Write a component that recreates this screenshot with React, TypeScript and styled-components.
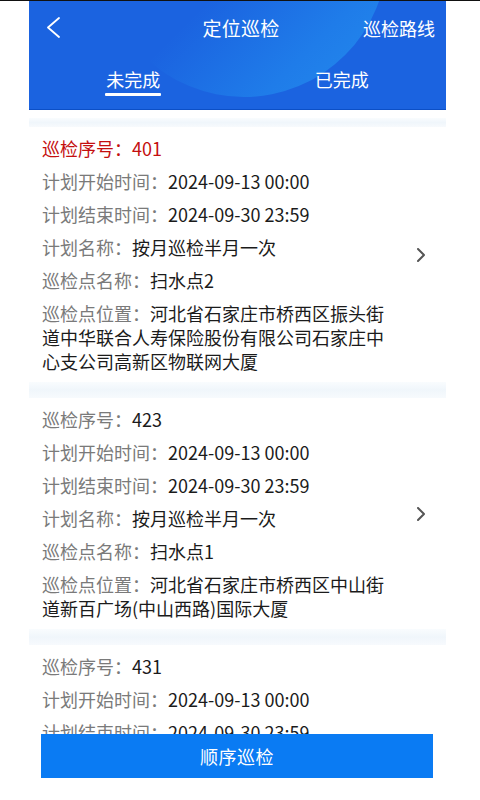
import React from "react";
import styled, { createGlobalStyle } from "styled-components";

interface Task {
  no: number;
  start: string;
  end: string;
  plan: string;
  point: string;
  address: string;
  urgent?: boolean;
}

const tasks: Task[] = [
  {
    no: 401,
    start: "2024-09-13 00:00",
    end: "2024-09-30 23:59",
    plan: "按月巡检半月一次",
    point: "扫水点2",
    address: "河北省石家庄市桥西区振头街道中华联合人寿保险股份有限公司石家庄中心支公司高新区物联网大厦",
    urgent: true,
  },
  {
    no: 423,
    start: "2024-09-13 00:00",
    end: "2024-09-30 23:59",
    plan: "按月巡检半月一次",
    point: "扫水点1",
    address: "河北省石家庄市桥西区中山街道新百广场(中山西路)国际大厦",
  },
  {
    no: 431,
    start: "2024-09-13 00:00",
    end: "2024-09-30 23:59",
    plan: "按月巡检半月一次",
    point: "扫水点3",
    address: "河北省石家庄市桥西区振头街道高新区物联网大厦",
  },
];

const GlobalStyle = createGlobalStyle`
  body {
    margin: 0;
    background: #fff;
    font-family: "Noto Sans CJK SC", "Noto Sans", sans-serif;
  }
`;

const TopStrip = styled.div`
  height: 1px;
  background: #111;
`;

const Page = styled.div`
  margin-left: 29px;
  width: 417px;
  padding-bottom: 90px;
`;

const Header = styled.header`
  position: relative;
  overflow: hidden;
  height: 108px;
  background: #1b63e0;
  border-bottom: 1px solid #0c4fc6;
  color: #fff;

  /* decorative light disc in the top half */
  &::before {
    content: "";
    position: absolute;
    left: 72px;
    top: -190px;
    width: 286px;
    height: 286px;
    border-radius: 50%;
    background: linear-gradient(135deg, #1b63e0 52%, #1f7ce9 78%, #2183eb 88%);
  }
`;

const TitleBar = styled.div`
  position: relative;
  height: 53px;
  display: grid;
  grid-template-columns: 1fr auto 1fr;
  align-items: center;
  padding: 0 11px 0 18px;
`;

const BackButton = styled.div`
  display: flex;
  align-items: center;
`;

const Title = styled.div`
  font-size: 19px;
  line-height: 24px;
  letter-spacing: 0.2px;
`;

const Action = styled.div`
  justify-self: end;
  font-size: 18px;
  line-height: 24px;
`;

const Tabs = styled.div`
  position: relative;
  display: flex;
  height: 55px;
`;

const Tab = styled.div`
  flex: 1;
  display: flex;
  flex-direction: column;
  align-items: center;
  padding-top: 13px;
`;

const TabText = styled.span`
  font-size: 18px;
  line-height: 24px;
`;

const Underline = styled.div<{ $show: boolean }>`
  margin-top: 2px;
  width: 56px;
  height: 2.5px;
  border-radius: 1px;
  background: ${(p) => (p.$show ? "#fff" : "transparent")};
`;

const List = styled.div`
  padding-top: 8px;
`;

const Band = styled.div<{ $h: number }>`
  height: ${(p) => p.$h}px;
  background: linear-gradient(#f9fcfe, #f0f6fb 50%, #f7fafd);
`;

const Card = styled.div`
  display: flex;
  align-items: center;
  padding: 9px 0 9px 13px;
`;

const Info = styled.div`
  width: 358px;
  display: flex;
  flex-direction: column;
  gap: 9px;
`;

const Row = styled.div<{ $red?: boolean }>`
  font-size: 18px;
  line-height: 24px;
  color: ${(p) => (p.$red ? "#c40f0f" : "#1b1b1b")};
  word-break: break-all;
`;

const Label = styled.span<{ $red?: boolean }>`
  color: ${(p) => (p.$red ? "#c40f0f" : "#7a7a7a")};
`;

const Arrow = styled.div`
  flex: 1;
  display: flex;
  justify-content: center;
  padding-right: 5px;
`;

const Footer = styled.div`
  position: fixed;
  left: 29px;
  bottom: 0;
  width: 417px;
  height: 66px;
  box-sizing: border-box;
  padding: 0 13px 22px 12px;
  background: #fff;
  display: flex;
`;

const BottomButton = styled.button`
  flex: 1;
  height: 44px;
  border: none;
  border-radius: 0;
  background: #0a7bf3;
  color: #fff;
  font-family: inherit;
  font-size: 18px;
  letter-spacing: 0.5px;
`;

const Chevron = ({ color, w, h, sw, left }: { color: string; w: number; h: number; sw: number; left?: boolean }) => (
  <svg width={w} height={h} viewBox={`0 0 ${w} ${h}`} fill="none">
    <polyline
      points={left ? `${w - 1},1 1,${h / 2} ${w - 1},${h - 1}` : `1,1 ${w - 1},${h / 2} 1,${h - 1}`}
      stroke={color}
      strokeWidth={sw}
      strokeLinecap="round"
      strokeLinejoin="round"
    />
  </svg>
);

const TaskCard = ({ task }: { task: Task }) => {
  const rows: [string, string][] = [
    ["计划开始时间：", task.start],
    ["计划结束时间：", task.end],
    ["计划名称：", task.plan],
    ["巡检点名称：", task.point],
    ["巡检点位置：", task.address],
  ];
  return (
    <Card>
      <Info>
        <Row $red={task.urgent}>
          <Label $red={task.urgent}>巡检序号：</Label>
          {task.no}
        </Row>
        {rows.map(([label, value]) => (
          <Row key={label}>
            <Label>{label}</Label>
            {value}
          </Row>
        ))}
      </Info>
      <Arrow>
        <Chevron color="#555" w={8} h={14} sw={2} />
      </Arrow>
    </Card>
  );
};

export default function App() {
  return (
    <>
      <GlobalStyle />
      <TopStrip />
      <Page>
        <Header>
          <TitleBar>
            <BackButton>
              <Chevron color="#fff" w={13} h={21} sw={1.8} left />
            </BackButton>
            <Title>定位巡检</Title>
            <Action>巡检路线</Action>
          </TitleBar>
          <Tabs>
            {["未完成", "已完成"].map((t, i) => (
              <Tab key={t}>
                <TabText>{t}</TabText>
                <Underline $show={i === 0} />
              </Tab>
            ))}
          </Tabs>
        </Header>
        <List>
          {tasks.map((task, i) => (
            <React.Fragment key={task.no}>
              <Band $h={i === 0 ? 9 : 16} />
              <TaskCard task={task} />
            </React.Fragment>
          ))}
        </List>
      </Page>
      <Footer>
        <BottomButton>顺序巡检</BottomButton>
      </Footer>
    </>
  );
}
